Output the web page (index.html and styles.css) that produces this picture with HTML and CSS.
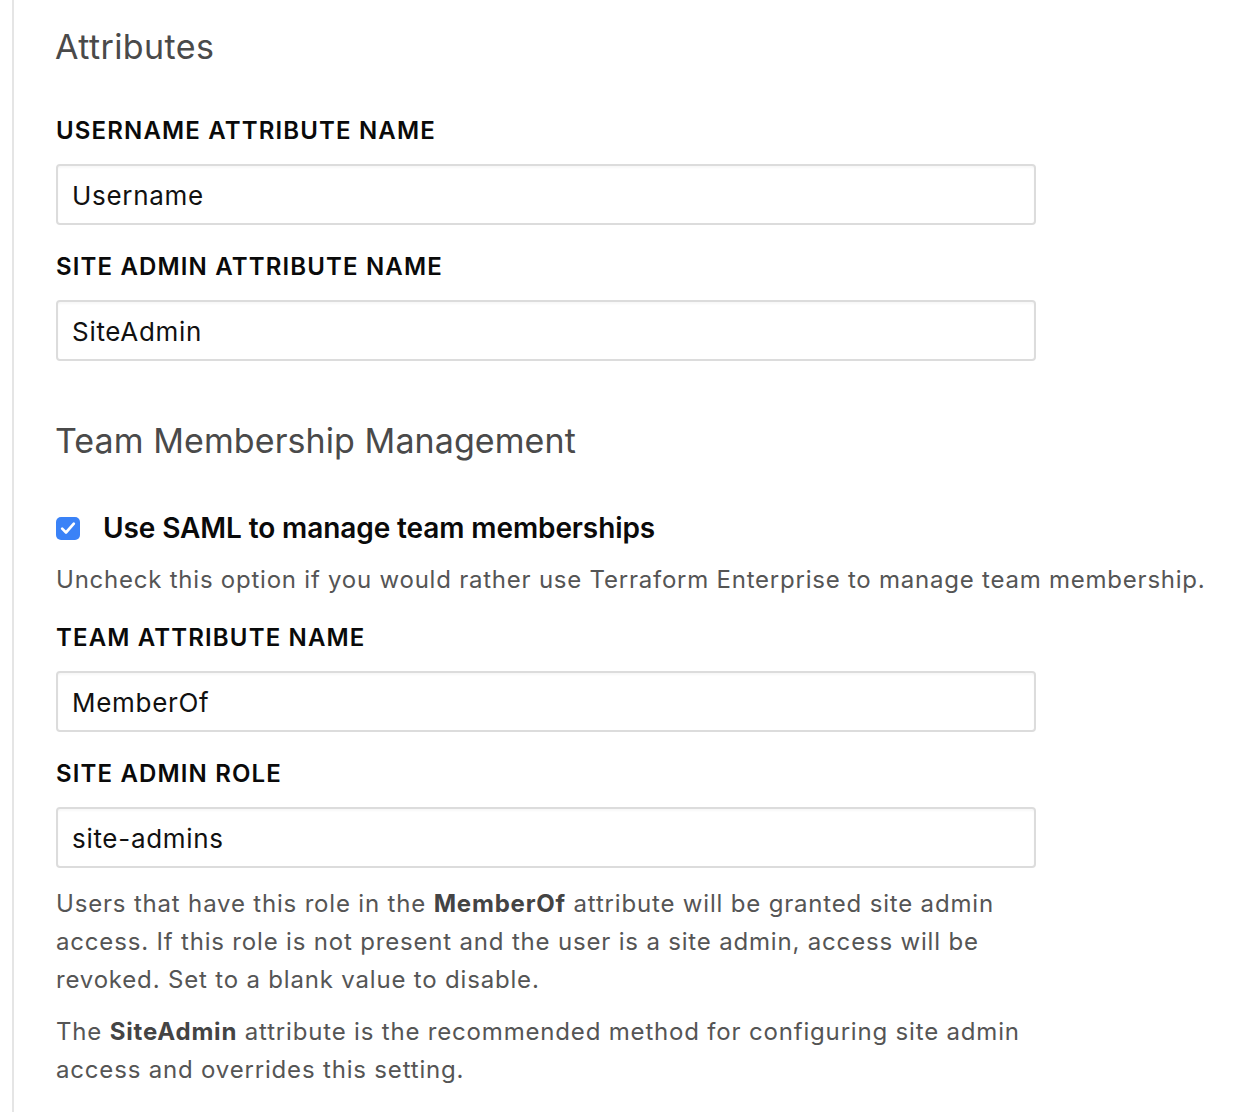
FILE: index.html
```html
<!DOCTYPE html>
<html lang="en">
<head>
<meta charset="utf-8">
<link rel="stylesheet" href="styles.css">
<title>SAML Settings</title>
</head>
<body>
<div class="page">
  <section class="panel">
    <h2 class="section-title">Attributes</h2>

    <label class="field-label" for="username-attr">Username Attribute Name</label>
    <input class="text-input" id="username-attr" type="text" value="Username">

    <label class="field-label" for="siteadmin-attr">Site Admin Attribute Name</label>
    <input class="text-input" id="siteadmin-attr" type="text" value="SiteAdmin">

    <h2 class="section-title section-title--second">Team Membership Management</h2>

    <label class="check-row">
      <span class="checkbox">
        <svg viewBox="0 0 24 24" width="20" height="20" aria-hidden="true"><path d="M5 12.8l4.6 4.6L19 6.8" fill="none" stroke="#fff" stroke-width="3.2" stroke-linecap="round" stroke-linejoin="round"/></svg>
      </span>
      <span class="check-text">Use SAML to manage team memberships</span>
    </label>
    <p class="help">Uncheck this option if you would rather use Terraform Enterprise to manage team membership.</p>

    <label class="field-label field-label--tight" for="team-attr">Team Attribute Name</label>
    <input class="text-input" id="team-attr" type="text" value="MemberOf">

    <label class="field-label" for="site-admin-role">Site Admin Role</label>
    <input class="text-input" id="site-admin-role" type="text" value="site-admins">

    <p class="note">Users that have this role in the <strong>MemberOf</strong> attribute will be granted site admin access. If this role is not present and the user is a site admin, access will be revoked. Set to a blank value to disable.</p>
    <p class="note note--second">The <strong>SiteAdmin</strong> attribute is the recommended method for configuring site admin access and overrides this setting.</p>
  </section>
</div>
</body>
</html>
```

FILE: styles.css
```css
* { box-sizing: border-box; }

html, body {
  margin: 0;
  padding: 0;
  background: #fff;
}

body {
  font-family: Inter, "Noto Sans", "Liberation Sans", sans-serif;
  color: #111;
}

.page {
  padding-left: 12px;
  min-height: 1112px;
}

.panel {
  border-left: 2px solid #e5e5e5;
  padding: 27px 0 20px 42px;
  min-height: 1112px;
  display: flex;
  flex-direction: column;
  align-items: flex-start;
}

.section-title {
  margin: 0 0 0 -1px;
  font-size: 34px;
  line-height: 40px;
  font-weight: 400;
  color: #4a4a4a;
  letter-spacing: 0.4px;
}

.section-title--second {
  margin-top: 60px;
  margin-left: -1px;
  letter-spacing: 0.08px;
}

.field-label {
  display: block;
  margin-top: 27px;
  font-size: 24px;
  line-height: 30px;
  font-weight: 600;
  text-transform: uppercase;
  letter-spacing: 1.15px;
  color: #0a0a0a;
}

.section-title + .field-label {
  margin-top: 49px;
}

.field-label--tight {
  margin-top: 28px;
}

.text-input {
  display: block;
  margin-top: 18px;
  width: 980px;
  height: 61px;
  padding: 1px 14px 0;
  border: 2px solid #dcdcdc;
  border-radius: 4px;
  font-family: inherit;
  font-size: 26px;
  letter-spacing: 0.7px;
  color: #111;
  background: #fff;
  box-shadow: inset 0 2px 2px rgba(0,0,0,0.03);
  outline: none;
}

.check-row {
  display: flex;
  align-items: center;
  gap: 23px;
  margin-top: 49px;
  height: 36px;
}

.checkbox {
  flex: none;
  width: 24px;
  height: 23px;
  border-radius: 5px;
  background: #3a82f7;
  display: flex;
  align-items: center;
  justify-content: center;
}

.checkbox svg {
  display: block;
}

.check-text {
  font-size: 28px;
  line-height: 36px;
  font-weight: 600;
  letter-spacing: -0.1px;
  color: #0a0a0a;
}

.help {
  margin: 19px 0 0;
  font-size: 24px;
  line-height: 30px;
  letter-spacing: 0.77px;
  color: #555;
}

.note {
  margin: 17px 0 0;
  max-width: 980px;
  font-size: 24px;
  line-height: 38px;
  letter-spacing: 0.82px;
  color: #555;
}

.note strong {
  font-weight: 700;
  color: #444;
}

.note--second {
  margin-top: 14px;
}
```
